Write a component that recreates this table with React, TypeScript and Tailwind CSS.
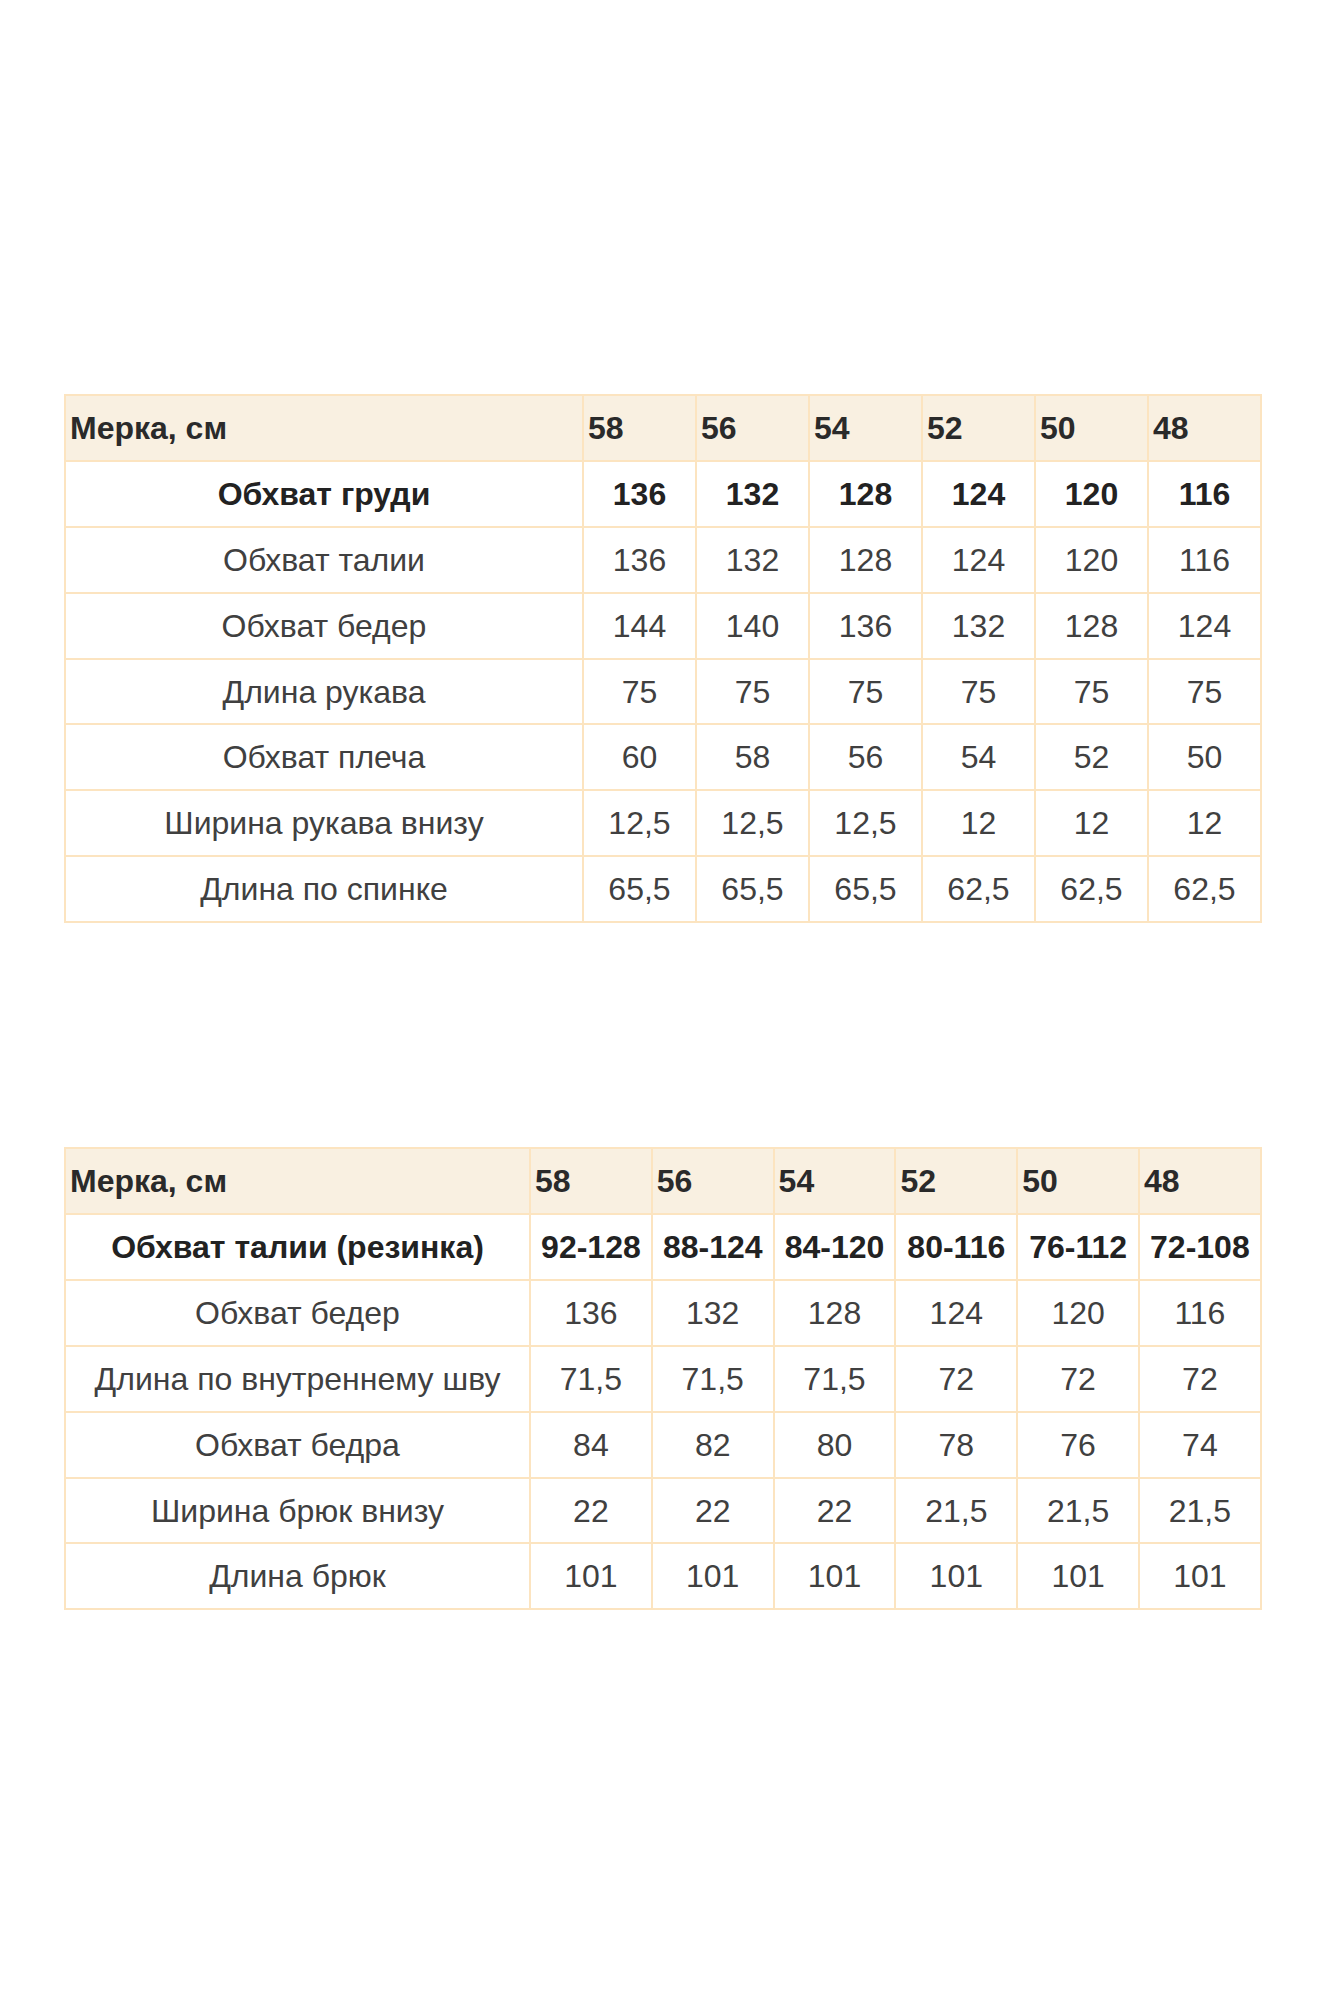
import React from "react";

type Row = { label: string; values: string[]; bold?: boolean };

const sizes = ["58", "56", "54", "52", "50", "48"];

const top: Row[] = [
  { label: "Обхват груди", values: ["136", "132", "128", "124", "120", "116"], bold: true },
  { label: "Обхват талии", values: ["136", "132", "128", "124", "120", "116"] },
  { label: "Обхват бедер", values: ["144", "140", "136", "132", "128", "124"] },
  { label: "Длина рукава", values: ["75", "75", "75", "75", "75", "75"] },
  { label: "Обхват плеча", values: ["60", "58", "56", "54", "52", "50"] },
  { label: "Ширина рукава внизу", values: ["12,5", "12,5", "12,5", "12", "12", "12"] },
  { label: "Длина по спинке", values: ["65,5", "65,5", "65,5", "62,5", "62,5", "62,5"] },
];

const bottom: Row[] = [
  { label: "Обхват талии (резинка)", values: ["92-128", "88-124", "84-120", "80-116", "76-112", "72-108"], bold: true },
  { label: "Обхват бедер", values: ["136", "132", "128", "124", "120", "116"] },
  { label: "Длина по внутреннему шву", values: ["71,5", "71,5", "71,5", "72", "72", "72"] },
  { label: "Обхват бедра", values: ["84", "82", "80", "78", "76", "74"] },
  { label: "Ширина брюк внизу", values: ["22", "22", "22", "21,5", "21,5", "21,5"] },
  { label: "Длина брюк", values: ["101", "101", "101", "101", "101", "101"] },
];

const boldCell = "border-2 border-[#fce4c0] text-center font-bold text-[#222222] whitespace-nowrap";
const normalCell = "border-2 border-[#fce4c0] text-center font-normal text-[#404040] whitespace-nowrap";
const headCell = "border-2 border-[#fce4c0] text-left font-bold text-[#2a2a2a] pl-[4px]";

function SizeTable({ rows, firstCol, colW }: { rows: Row[]; firstCol: string; colW: string }) {
  return (
    <table className="table-fixed border-collapse w-[1196px] text-[32px] leading-none">
      <colgroup>
        <col className={firstCol} />
        {sizes.map((s) => (
          <col key={s} className={colW} />
        ))}
      </colgroup>
      <thead>
        <tr className="h-[65.9px] bg-[#f9f0e1]">
          <th className={headCell}>Мерка, см</th>
          {sizes.map((s) => (
            <th key={s} className={headCell}>
              {s}
            </th>
          ))}
        </tr>
      </thead>
      <tbody>
        {rows.map((r) => (
          <tr key={r.label} className="h-[65.9px] bg-white">
            <td className={r.bold ? boldCell : normalCell}>{r.label}</td>
            {r.values.map((v, i) => (
              <td key={i} className={r.bold ? boldCell : normalCell}>
                {v}
              </td>
            ))}
          </tr>
        ))}
      </tbody>
    </table>
  );
}

export default function App() {
  return (
    <div
      className="w-[1333px] h-[2000px] bg-white pt-[394px] pl-[64px]"
      style={{ fontFamily: '"Liberation Sans", Arial, sans-serif' }}
    >
      <div className="flex flex-col gap-[224px]">
        <SizeTable rows={top} firstCol="w-[518px]" colW="w-[113px]" />
        <SizeTable rows={bottom} firstCol="w-[465px]" colW="w-[121.8px]" />
      </div>
    </div>
  );
}
